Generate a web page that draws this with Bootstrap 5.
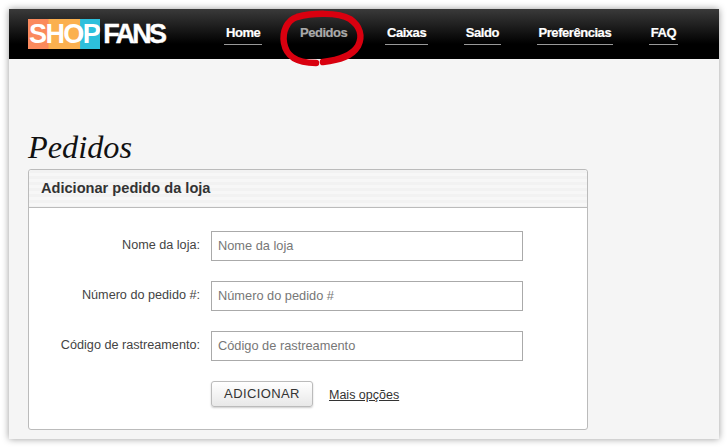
<!DOCTYPE html>
<html lang="pt">
<head>
<meta charset="utf-8">
<title>Pedidos</title>
<link href="https://cdn.jsdelivr.net/npm/bootstrap@5.3.0/dist/css/bootstrap.min.css" rel="stylesheet">
<style>
html,body{height:447px;overflow:hidden;background:#fff}
body{font-family:"Liberation Sans",Arial,sans-serif;padding:9px 8px 8px 9px}
.shot-win{position:relative;height:430px;background:#f5f5f5;box-shadow:0 0 7px rgba(0,0,0,.4);overflow:hidden}
.shot-top{height:50px;background:linear-gradient(#3a3a3a,#000 70%);padding-left:19px}
.brand-box{width:138px;font-weight:700;font-size:27px;letter-spacing:-1.6px;line-height:29px}
.brand-shop{color:#fff;padding:0 1px;background:linear-gradient(90deg,#fa8a5f 0,#fb8a5a 28%,#fbb04f 29%,#fbb04f 72%,#2dbfdc 73%)}
.brand-fans{color:#fff;margin-left:3px;letter-spacing:-2.7px;-webkit-text-stroke:.4px #fff}
.top-links{margin-left:58px;gap:35.6px;margin-top:1px}
.top-links a{color:#fff;font-weight:700;font-size:13px;letter-spacing:-.45px;text-decoration:none;border-bottom:1px solid #999;padding:0 2px 2px;line-height:18px;-webkit-text-stroke:.2px currentColor}
.top-links a.now{color:#aaa;border-bottom-color:transparent}
.shot-main{padding:70px 0 0 19px}
.shot-h{font-family:"Liberation Serif",serif;font-style:italic;font-size:32.3px;line-height:36px;margin:0 0 4px;color:#111;font-weight:400}
.shot-card{width:560px;height:261px;background:#fff;border:1px solid #bbb;border-radius:3px}
.shot-head{height:38px;background:repeating-linear-gradient(#f2f2f2 0 3px,#f7f7f7 3px 6px);border-bottom:1px solid #bbb;padding-left:12px;font-weight:700;font-size:14.6px;line-height:37px;color:#333;border-radius:3px 3px 0 0}
.shot-body{padding:23px 0 0}
.form-line{height:30px;margin-bottom:20px;display:flex;align-items:center}
.form-line label{width:171px;text-align:right;font-size:12.65px;color:#444;margin:0 1px 2px 0;flex:none}
.form-line input{margin-left:10px;width:312px;height:30px;border:1px solid #aaa;border-radius:0;padding:0 6px 2px;font-size:12.8px;font-family:inherit;background:#fff}
.form-line input::placeholder{color:#777;opacity:1}
.act-line{padding-left:182px;gap:16px}
.act-btn{width:102px;height:26px;padding:0;font-size:13px;letter-spacing:.4px;color:#333;border:1px solid #bbb;border-radius:3px;background:linear-gradient(#fff,#e8e8e8);box-shadow:0 1px 2px rgba(0,0,0,.2)}
.act-line a{font-size:12.5px;color:#333;padding-top:2px}
.scribble{position:absolute;left:-9px;top:-9px;pointer-events:none}
</style>
</head>
<body>
<div class="shot-win">
  <div class="shot-top d-flex align-items-center">
    <div class="brand-box flex-shrink-0 text-nowrap"><span class="brand-shop">SHOP</span><span class="brand-fans">FANS</span></div>
    <nav class="top-links d-flex align-items-center">
      <a href="#">Home</a>
      <a href="#" class="now">Pedidos</a>
      <a href="#">Caixas</a>
      <a href="#">Saldo</a>
      <a href="#">Preferências</a>
      <a href="#">FAQ</a>
    </nav>
  </div>
  <div class="shot-main">
    <h1 class="shot-h">Pedidos</h1>
    <div class="shot-card">
      <div class="shot-head">Adicionar pedido da loja</div>
      <form class="shot-body">
        <div class="form-line"><label for="a">Nome da loja:</label><input id="a" placeholder="Nome da loja"></div>
        <div class="form-line"><label for="b">Número do pedido #:</label><input id="b" placeholder="Número do pedido #"></div>
        <div class="form-line"><label for="c">Código de rastreamento:</label><input id="c" placeholder="Código de rastreamento"></div>
        <div class="act-line d-flex align-items-center"><button type="button" class="btn act-btn">ADICIONAR</button><a href="#">Mais opções</a></div>
      </form>
    </div>
  </div>
  <svg class="scribble" width="727" height="447" viewBox="0 0 727 447" fill="none" stroke="#d9000f" stroke-width="6.5" stroke-linecap="round" stroke-linejoin="round">
    <path d="M323 62C340 60 352 56 358 46C363 36 360 26 350 19C338 12 312 13 297 17C287 20 282 32 284 43C286 54 293 63 316 63"/>
  </svg>
</div>
</body>
</html>
